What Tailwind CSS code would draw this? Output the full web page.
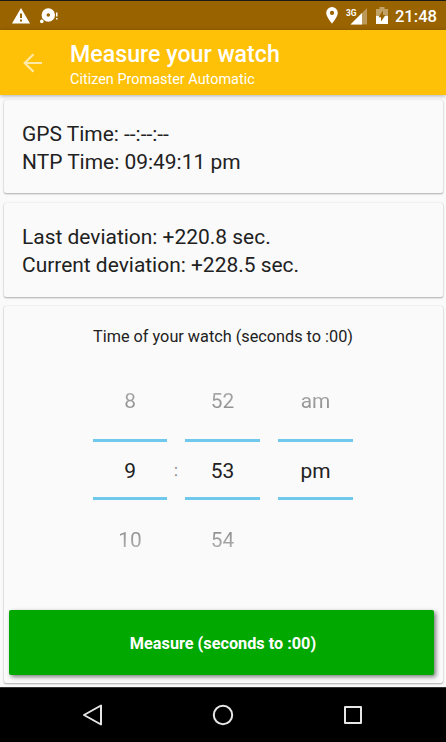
<!DOCTYPE html>
<html lang="en">
<head>
    <meta charset="UTF-8">
    <meta name="viewport" content="width=device-width, initial-scale=1.0">
    <title>Measure your watch</title>
    <script src="https://cdn.jsdelivr.net/npm/@tailwindcss/browser@4"></script>
</head>
<body class="h-[742px] w-[446px] overflow-hidden bg-[#fafafa] font-['Roboto',sans-serif] text-[#212121] flex flex-col">
    <!-- Status bar -->
    <div class="h-[30px] shrink-0 bg-[#996300] border-t border-[#1f1a1a] text-white flex items-center">
        <svg class="ml-3 w-[18px] h-4 shrink-0" viewBox="0 0 18 16" fill="currentColor">
            <path fill-rule="evenodd" d="M9 0 18 15.5H0ZM8 5.5v4.5h2V5.5ZM8 11.5v2h2v-2Z"/>
        </svg>
        <svg class="ml-[10px] w-[18px] h-4 shrink-0" viewBox="0 0 18 16" fill="currentColor">
            <path fill-rule="evenodd" d="M8.300 .3a6.700 6.700 0 1 1 0 13.400a6.700 6.700 0 1 1 0-13.400ZM8.300 5.200a1.800 1.800 0 1 0 0 3.600a1.800 1.800 0 1 0 0-3.600Z"/>
            <circle cx="1.800" cy="13.400" r="1.800"/>
            <path d="M16 4.500h1.500v4H16ZM16 10h1.500v1.500H16Z"/>
        </svg>
        <div class="flex-1"></div>
        <svg class="w-[12px] h-[17px]" viewBox="0 0 12 17" fill="currentColor">
            <path fill-rule="evenodd" d="M6 0a5.800 5.800 0 0 1 5.800 5.800C11.800 10 6 16.700 6 16.700S.2 10 .2 5.800A5.800 5.800 0 0 1 6 0ZM6 3.800a2.100 2.100 0 1 0 0 4.200a2.100 2.100 0 1 0 0-4.200Z"/>
        </svg>
        <svg class="ml-2 w-[22px] h-[18px]" viewBox="0 0 22 18" fill="currentColor">
            <path d="M21 1v16.500H4.500Z" opacity=".35"/>
            <path d="M16 6v11.500H4.500Z"/>
            <text x="0" y="8.500" class="text-[9.500px] font-bold" textLength="10.500" lengthAdjust="spacingAndGlyphs">3G</text>
        </svg>
        <svg class="ml-2 w-3 h-[17px]" viewBox="0 0 12 17" fill="currentColor">
            <path opacity=".4" d="M3.500 0h5v2H12v7H0V2h3.500Z"/>
            <path d="M0 9h12v8H0Z"/>
            <path fill="#996300" d="M7 3.500 2.500 10.300H5v4.200l4.500-6.500H7Z"/>
        </svg>
        <span class="ml-[7px] mr-[9px] text-[16.600px] leading-none font-medium pt-[3px]">21:48</span>
    </div>

    <!-- Toolbar -->
    <header class="relative z-10 h-[65px] shrink-0 bg-[#ffc107] text-white flex items-center shadow-[0_1px_4px_rgba(0,0,0,0.3)]">
        <svg class="ml-[23px] w-[20px] h-[20px] text-white/65" viewBox="0 0 20 20" fill="none" stroke="currentColor" stroke-width="2.200">
            <path d="M19 10H2M10.500 1.200 1.700 10l8.800 8.800"/>
        </svg>
        <div class="ml-[27px] pt-[7px]">
            <h1 class="text-[23.200px] leading-[27px] font-medium">Measure your watch</h1>
            <p class="text-[14.450px] leading-[23px]">Citizen Promaster Automatic</p>
        </div>
    </header>

    <main class="flex-1 px-[3.500px] pt-[5px] flex flex-col">
        <section class="h-[93px] shrink-0 rounded-[2px] pl-[18.500px] pt-5 text-[20.950px] leading-7 shadow-[0_1px_2px_rgba(0,0,0,0.3),0_0_1px_rgba(0,0,0,0.2)] bg-[#fafafa]">
            <p>GPS Time: --:--:--</p>
            <p>NTP Time: 09:49:11 pm</p>
        </section>
        <section class="mt-[10px] h-[94px] shrink-0 rounded-[2px] pl-[18.500px] pt-5 text-[20.950px] leading-7 shadow-[0_1px_2px_rgba(0,0,0,0.3),0_0_1px_rgba(0,0,0,0.2)] bg-[#fafafa]">
            <p>Last deviation: +220.8 sec.</p>
            <p>Current deviation: +228.5 sec.</p>
        </section>
        <section class="mt-[9px] h-[377px] shrink-0 rounded-[2px] px-[5.500px] pb-2 shadow-[0_1px_2px_rgba(0,0,0,0.3),0_0_1px_rgba(0,0,0,0.2)] bg-[#fafafa] flex flex-col">
            <p class="mt-5 text-center text-[16.250px] leading-[22px]">Time of your watch (seconds to :00)</p>

            <!-- Time picker -->
            <div class="mt-[18px] flex justify-center text-center text-[20.900px]">
                <div class="w-[74px]">
                    <div class="h-[73px] pt-[21px] leading-7"><span class="bg-linear-to-b from-[#adadad] to-[#8a8a8a] bg-clip-text text-transparent">8</span></div>
                    <div class="h-[61px] border-y-[3px] border-[#70c8ec] leading-[58px]">9</div>
                    <div class="pt-[26px] leading-7"><span class="bg-linear-to-b from-[#8a8a8a] to-[#b5b5b5] bg-clip-text text-transparent">10</span></div>
                </div>
                <div class="w-[18px] pt-[93px] text-base leading-6 text-[#757575]">:</div>
                <div class="w-[75px]">
                    <div class="h-[73px] pt-[21px] leading-7"><span class="bg-linear-to-b from-[#adadad] to-[#8a8a8a] bg-clip-text text-transparent">52</span></div>
                    <div class="h-[61px] border-y-[3px] border-[#70c8ec] leading-[58px]">53</div>
                    <div class="pt-[26px] leading-7"><span class="bg-linear-to-b from-[#8a8a8a] to-[#b5b5b5] bg-clip-text text-transparent">54</span></div>
                </div>
                <div class="ml-[18px] w-[75px]">
                    <div class="h-[73px] pt-[21px] leading-7"><span class="bg-linear-to-b from-[#adadad] to-[#8a8a8a] bg-clip-text text-transparent">am</span></div>
                    <div class="h-[61px] border-y-[3px] border-[#70c8ec] leading-[58px]">pm</div>
                </div>
            </div>

            <button class="mt-auto mr-[3px] h-[65px] shrink-0 rounded-[2px] bg-[#00a800] text-white text-[16.250px] font-bold pt-1 pl-[3px] shadow-[2px_2px_4px_rgba(0,0,0,0.5)]">Measure (seconds to :00)</button>
        </section>
    </main>

    <!-- Navigation bar -->
    <nav class="h-[55px] shrink-0 bg-black border-t border-[#333] pr-[2px] flex items-center justify-center gap-[109px]">
        <svg class="w-[21px] h-[22px]" viewBox="0 0 21 22" fill="none" stroke="#e6e6e6" stroke-width="2" stroke-linejoin="round"><path d="M19 1.500v19L2 11Z"/></svg>
        <svg class="w-[22px] h-[22px]" viewBox="0 0 22 22" fill="none" stroke="#e6e6e6" stroke-width="2"><circle cx="11" cy="11" r="9.200"/></svg>
        <svg class="w-[20px] h-[20px]" viewBox="0 0 20 20" fill="none" stroke="#e6e6e6" stroke-width="2" stroke-linejoin="round"><rect x="2" y="2" width="16" height="16"/></svg>
    </nav>
</body>
</html>
